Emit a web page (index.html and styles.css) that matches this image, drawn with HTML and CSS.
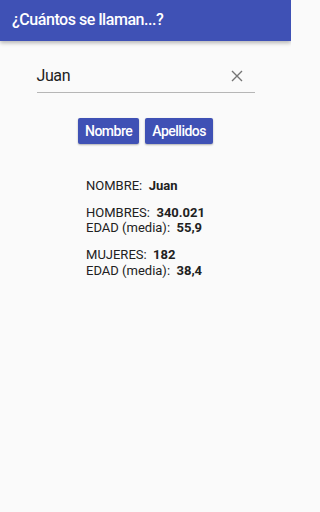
FILE: index.html
```html
<!DOCTYPE html>
<html lang="es">
<head>
<meta charset="utf-8">
<link rel="stylesheet" href="styles.css">
</head>
<body>
<header class="appbar">
  <h1 class="title">¿Cuántos se llaman...?</h1>
</header>
<main class="content">
  <div class="field">
    <span class="field-value">Juan</span>
    <svg class="clear" width="12" height="12" viewBox="0 0 12 12" aria-hidden="true">
      <path d="M1 1 L11 11 M11 1 L1 11" stroke="#757575" stroke-width="1.4" fill="none"/>
    </svg>
  </div>
  <div class="actions">
    <button class="btn">Nombre</button>
    <button class="btn">Apellidos</button>
  </div>
  <div class="results">
    <div class="group">
      <div class="line">NOMBRE:&nbsp; <b>Juan</b></div>
    </div>
    <div class="group">
      <div class="line">HOMBRES:&nbsp; <b>340.021</b></div>
      <div class="line">EDAD (media):&nbsp; <b>55,9</b></div>
    </div>
    <div class="group">
      <div class="line">MUJERES:&nbsp; <b>182</b></div>
      <div class="line">EDAD (media):&nbsp; <b>38,4</b></div>
    </div>
  </div>
</main>
</body>
</html>
```

FILE: styles.css
```css
html {
  background: #fafafa;
}
html, body {
  margin: 0;
  padding: 0;
}
body {
  width: 291px;
  height: 512px;
  background: #fafafa;
  font-family: Roboto, "Noto Sans", sans-serif;
  overflow: hidden;
}
.appbar {
  height: 41px;
  background: #3f51b5;
  box-shadow: 0 2px 4px rgba(0,0,0,0.28);
  display: flex;
  align-items: center;
  padding-left: 12px;
  position: relative;
  z-index: 1;
}
.title {
  margin: 0;
  color: #fff;
  font-size: 16px;
  font-weight: 500;
  letter-spacing: -0.45px;
  line-height: 20px;
  padding-bottom: 1px;
}
.content {
  display: flex;
  flex-direction: column;
  align-items: center;
}
.field {
  margin-top: 23px;
  width: 218px;
  height: 24px;
  padding-bottom: 4px;
  border-bottom: 1px solid #b6b6b6;
  display: flex;
  align-items: center;
  justify-content: space-between;
}
.field-value {
  font-size: 16px;
  letter-spacing: -0.4px;
  color: #212121;
  line-height: 20px;
}
.clear {
  margin-right: 12px;
}
.actions {
  margin-top: 25px;
  display: flex;
  gap: 6px;
}
.btn {
  font-family: Roboto, "Noto Sans", sans-serif;
  font-size: 14px;
  font-weight: 500;
  letter-spacing: -0.5px;
  color: #fff;
  background: #3f51b5;
  border: none;
  border-radius: 2px;
  height: 26px;
  padding: 0 7px;
  box-shadow: 0 1px 2px rgba(0,0,0,0.3);
}
.results {
  margin-top: 34px;
  font-size: 13px;
  line-height: 15.4px;
  color: #212121;
  display: flex;
  flex-direction: column;
  gap: 11.6px;
}
.results b {
  font-weight: 700;
}
```
